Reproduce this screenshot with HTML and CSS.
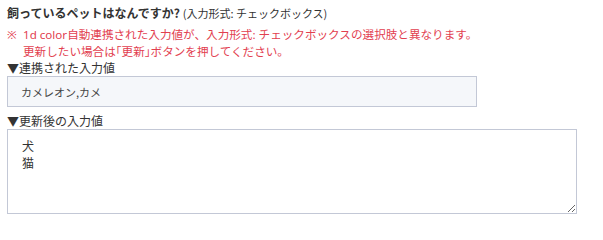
FILE: index.html
```html
<!DOCTYPE html>
<html lang="ja">
<head>
<meta charset="utf-8">
<link rel="stylesheet" href="styles.css">
</head>
<body>
<div class="field">
  <div class="title"><span class="q">飼っているペットはなんですか?</span> <span class="type">(入力形式: チェックボックス)</span></div>
  <div class="warn">
    <span class="mark">※</span>
    <span class="msg">1d color自動連携された入力値が、入力形式: チェックボックスの選択肢と異なります。<br>更新したい場合は｢更新｣ボタンを押してください。</span>
  </div>
  <div class="label">▼連携された入力値</div>
  <div class="linked">カメレオン,カメ</div>
  <div class="label label-2">▼更新後の入力値</div>
  <textarea class="updated">犬
猫</textarea>
</div>
</body>
</html>
```
FILE: styles.css
```css
html, body {
  margin: 0;
  background: #ffffff;
}
body {
  padding: 4px 7px 0;
  font-family: "Noto Sans CJK JP", "Noto Sans", sans-serif;
  font-size: 12px;
  color: #333333;
}
.field {
  display: flex;
  flex-direction: column;
  align-items: flex-start;
}
.title {
  line-height: 17px;
}
.title .q {
  font-weight: bold;
}
.title .type {
  font-size: 11px;
}
.warn {
  margin-top: 4px;
  display: flex;
  font-family: "Noto Sans", "Noto Sans CJK JP", sans-serif;
  font-size: 11.6px;
  line-height: 17px;
  color: #e2404f;
}
.warn .mark {
  width: 16px;
  flex: none;
}
.label {
  line-height: 16px;
}
.label-2 {
  margin-top: 5px;
  line-height: 17px;
}
.linked {
  box-sizing: border-box;
  width: 470px;
  height: 31px;
  display: flex;
  align-items: center;
  padding-left: 13px;
  background: #f5f7fa;
  border: 1px solid #c3c8d6;
  font-size: 11px;
  color: #444444;
}
.updated {
  box-sizing: border-box;
  width: 570px;
  height: 85px;
  margin: 0;
  padding: 7px 14px;
  border: 1px solid #c3c8d6;
  border-radius: 0;
  font-family: "Noto Sans CJK JP", "Noto Sans", sans-serif;
  font-size: 12px;
  line-height: 17px;
  color: #333333;
  background: #ffffff;
  outline: none;
}
```
